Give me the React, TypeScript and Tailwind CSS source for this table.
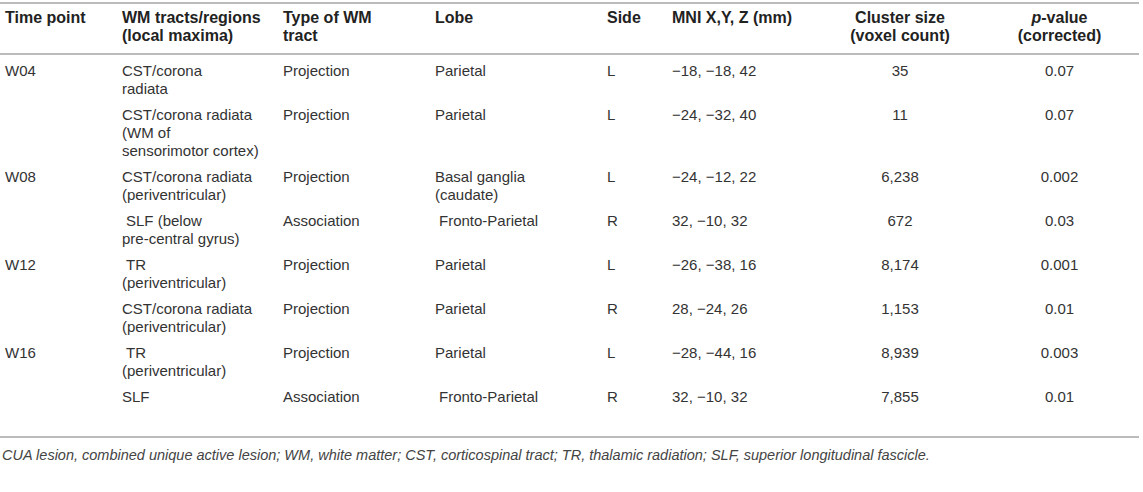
import React from "react";

type Row = {
  time?: string;
  tract: string[];
  type: string;
  lobe: string[];
  side: string;
  mni: string;
  cluster: string;
  p: string;
  indentTract?: boolean;
  indentLobe?: boolean;
};

const ROWS: Row[] = [
  { time: "W04", tract: ["CST/corona", "radiata"], type: "Projection", lobe: ["Parietal"], side: "L", mni: "\u221218, \u221218, 42", cluster: "35", p: "0.07" },
  { tract: ["CST/corona radiata", "(WM of", "sensorimotor cortex)"], type: "Projection", lobe: ["Parietal"], side: "L", mni: "\u221224, \u221232, 40", cluster: "11", p: "0.07" },
  { time: "W08", tract: ["CST/corona radiata", "(periventricular)"], type: "Projection", lobe: ["Basal ganglia", "(caudate)"], side: "L", mni: "\u221224, \u221212, 22", cluster: "6,238", p: "0.002" },
  { tract: ["SLF (below", "pre-central gyrus)"], indentTract: true, type: "Association", lobe: ["Fronto-Parietal"], indentLobe: true, side: "R", mni: "32, \u221210, 32", cluster: "672", p: "0.03" },
  { time: "W12", tract: ["TR", "(periventricular)"], indentTract: true, type: "Projection", lobe: ["Parietal"], side: "L", mni: "\u221226, \u221238, 16", cluster: "8,174", p: "0.001" },
  { tract: ["CST/corona radiata", "(periventricular)"], type: "Projection", lobe: ["Parietal"], side: "R", mni: "28, \u221224, 26", cluster: "1,153", p: "0.01" },
  { time: "W16", tract: ["TR", "(periventricular)"], indentTract: true, type: "Projection", lobe: ["Parietal"], side: "L", mni: "\u221228, \u221244, 16", cluster: "8,939", p: "0.003" },
  { tract: ["SLF"], type: "Association", lobe: ["Fronto-Parietal"], indentLobe: true, side: "R", mni: "32, \u221210, 32", cluster: "7,855", p: "0.01" },
];

const Lines = ({ lines, indent }: { lines: string[]; indent?: boolean }) => (
  <>
    {lines.map((l, i) => (
      <div key={i} className={i === 0 && indent ? "pl-[4px]" : ""}>
        {l}
      </div>
    ))}
  </>
);

export default function App() {
  return (
    <div className="w-[1143px] h-[492px] bg-white text-[#333] font-['Liberation_Sans',Arial,sans-serif] pt-[2px]">
      <table className="w-[1139px] table-fixed border-collapse text-[15px] leading-[18px]">
        <colgroup>
          <col className="w-[117px]" />
          <col className="w-[161px]" />
          <col className="w-[152px]" />
          <col className="w-[172px]" />
          <col className="w-[65px]" />
          <col className="w-[153px]" />
          <col className="w-[160px]" />
          <col className="w-[159px]" />
        </colgroup>
        <thead>
          <tr className="border-t-2 border-b-2 border-[#bbbbbb] align-top text-[16px] text-[#222]">
            <th className="text-left font-bold pl-[5px] pt-[5px] pb-[8px]">Time point</th>
            <th className="text-left font-bold pl-[5px] pt-[5px] pb-[8px]">
              WM tracts/regions
              <br />
              (local maxima)
            </th>
            <th className="text-left font-bold pl-[5px] pt-[5px] pb-[8px]">
              Type of WM
              <br />
              tract
            </th>
            <th className="text-left font-bold pl-[5px] pt-[5px] pb-[8px]">Lobe</th>
            <th className="text-left font-bold pl-[5px] pt-[5px] pb-[8px]">Side</th>
            <th className="text-left font-bold pl-[5px] pt-[5px] pb-[8px] whitespace-nowrap">MNI X,Y, Z (mm)</th>
            <th className="text-center font-bold pt-[5px] pb-[8px]">
              Cluster size
              <br />
              (voxel count)
            </th>
            <th className="text-center font-bold pt-[5px] pb-[8px]">
              <span className="italic">p</span>-value
              <br />
              (corrected)
            </th>
          </tr>
        </thead>
        <tbody>
          {ROWS.map((r, i) => {
            const first = i === 0;
            const last = i === ROWS.length - 1;
            const pad = `${first ? "pt-[7px]" : "pt-[4px]"} ${last ? "pb-[30px]" : "pb-[4px]"}`;
            return (
              <tr key={i} className={`align-top ${last ? "border-b-2 border-[#bbbbbb]" : ""}`}>
                <td className={`pl-[5px] ${pad}`}>{r.time}</td>
                <td className={`pl-[5px] ${pad}`}>
                  <Lines lines={r.tract} indent={r.indentTract} />
                </td>
                <td className={`pl-[5px] ${pad}`}>{r.type}</td>
                <td className={`pl-[5px] ${pad}`}>
                  <Lines lines={r.lobe} indent={r.indentLobe} />
                </td>
                <td className={`pl-[5px] ${pad}`}>{r.side}</td>
                <td className={`pl-[5px] ${pad}`}>{r.mni}</td>
                <td className={`text-center ${pad}`}>{r.cluster}</td>
                <td className={`text-center ${pad}`}>{r.p}</td>
              </tr>
            );
          })}
        </tbody>
      </table>
      <p className="pl-[2px] pt-[8px] text-[14.5px] leading-[18px] italic text-[#444]">
        CUA lesion, combined unique active lesion; WM, white matter; CST, corticospinal tract; TR, thalamic radiation; SLF, superior longitudinal fascicle.
      </p>
    </div>
  );
}
